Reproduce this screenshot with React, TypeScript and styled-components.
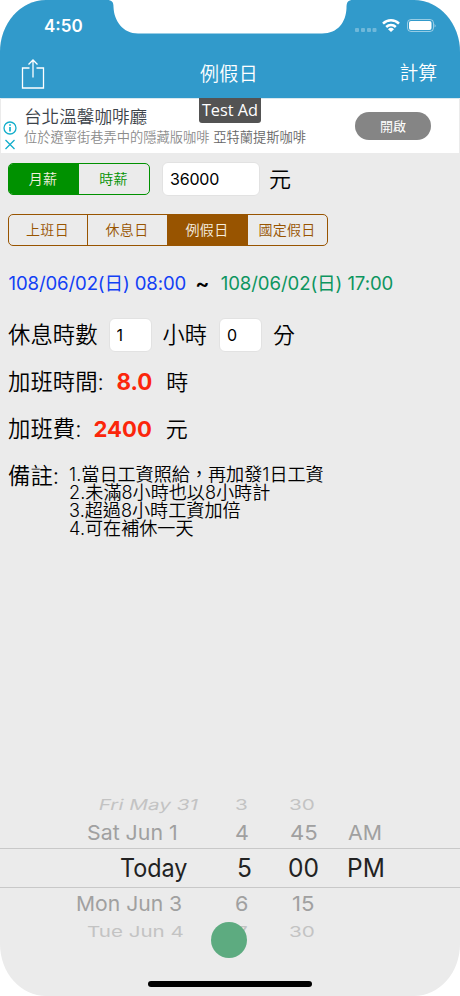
import React from "react";
import styled, { createGlobalStyle } from "styled-components";

const Global = createGlobalStyle`
  * { box-sizing: border-box; }
  html, body { margin: 0; background: #fff; }
`;

const Phone = styled.main`
  position: relative;
  width: 460px;
  height: 996px;
  overflow: hidden;
  display: flex;
  flex-direction: column;
  background: #ebebeb;
  border-radius: 46px / 52px;
  font-family: Inter, "Noto Sans CJK TC", sans-serif;
  color: #000;
`;

const Text = styled.span<{ $size: number; $x?: number; $y?: number; $track?: number; $weight?: number; $color?: string }>`
  flex: none;
  white-space: pre;
  line-height: 1;
  font-size: ${(p) => p.$size}px;
  margin-left: ${(p) => p.$x ?? 0}px;
  margin-top: ${(p) => p.$y ?? 0}px;
  letter-spacing: ${(p) => p.$track ?? 0}px;
  font-weight: ${(p) => p.$weight ?? 350};
  color: ${(p) => p.$color ?? "inherit"};
`;

const Header = styled.header`
  flex: none;
  height: 98px;
  background: #319acb;
  color: #fff;
`;

const StatusBar = styled.div`
  display: flex;
  align-items: center;
  height: 50px;
  padding-left: 44px;
`;

const StatusIcons = styled.svg`
  margin-left: auto;
  display: block;
`;

const NavBar = styled.nav`
  display: grid;
  grid-template-columns: 1fr auto 1fr;
  align-items: center;
  height: 48px;
  padding: 0 23px 0 21px;
  & > :last-child { justify-self: end; }
`;

const Notch = styled.svg`
  position: absolute;
  top: 0;
  left: 106px;
`;

const Ad = styled.section`
  position: relative;
  flex: none;
  display: flex;
  align-items: center;
  height: 55px;
  margin: 0 1px;
  background: #fff;
  border-top: 1px solid #d8e8ef;
`;

const AdMarks = styled.svg`
  flex: none;
  margin: 19px 0 0 1px;
`;

const AdCopy = styled.div`
  display: flex;
  flex-direction: column;
  gap: 5px;
  margin: 0 0 0 6px;
`;

const AdButton = styled.button`
  width: 76px;
  height: 28px;
  margin-left: auto;
  margin-right: 28px;
  padding: 0;
  border: 0;
  border-radius: 14px;
  background: #858585;
  color: #fff;
  font: 400 13px/26px "Noto Sans CJK TC", sans-serif;
`;

const AdBadge = styled.div`
  position: absolute;
  top: -1px;
  left: 198px;
  width: 62px;
  height: 25px;
  border-radius: 0 0 3px 3px;
  background: #535353;
  color: #fff;
  text-align: center;
  font: 400 16.3px/25px "Open Sans", sans-serif;
`;

const Row = styled.div<{ $h: number; $top: number }>`
  flex: none;
  display: flex;
  align-items: center;
  height: ${(p) => p.$h}px;
  margin-top: ${(p) => p.$top}px;
  padding-left: 8px;
`;

const Segments = styled.div<{ $color: string }>`
  display: flex;
  flex: none;
  height: 32px;
  border: 1px solid ${(p) => p.$color};
  border-radius: 5px;
  overflow: hidden;
  color: ${(p) => p.$color};
`;

const Segment = styled.button<{ $w: number; $color: string; $on?: boolean }>`
  width: ${(p) => p.$w}px;
  padding: 0 1px 2px 0;
  border: 0;
  border-right: 1px solid ${(p) => p.$color};
  background: ${(p) => (p.$on ? p.$color : "transparent")};
  color: ${(p) => (p.$on ? "#f5efe0" : p.$color)};
  font: 350 14px/1 "Noto Sans CJK TC", sans-serif;
  letter-spacing: 0.3px;
  &:last-child { border-right: 0; }
`;

const Field = styled.input<{ $w: number; $x: number }>`
  width: ${(p) => p.$w}px;
  height: 34px;
  margin-left: ${(p) => p.$x}px;
  padding: 0 7px 1px;
  border: 1px solid #e2e2e2;
  border-radius: 6px;
  background: #fff;
  color: #000;
  font: 400 16px Inter, sans-serif;
  letter-spacing: -0.2px;
  outline: 0;
`;

const Notes = styled.ol`
  list-style: none;
  margin: -2px 0 0 10px;
  padding: 0;
  font-size: 18.1px;
  font-weight: 350;
  line-height: 18.2px;
  white-space: nowrap;
`;

const Note = styled.li`
  height: 18.2px;
`;

const Picker = styled.section`
  margin-top: auto;
  height: 204px;
`;

const PickerRow = styled.div<{ $h: number; $tone: string; $current?: boolean }>`
  display: grid;
  grid-template-columns: 220px 65px 60px 1fr;
  align-items: center;
  height: ${(p) => p.$h}px;
  color: ${(p) => p.$tone};
  border: solid #c8c8c8;
  border-width: ${(p) => (p.$current ? "1px 0" : "0")};
`;

const Cell = styled.span<{ $x: number; $size: number; $sx: number; $skew?: number }>`
  justify-self: start;
  margin-left: ${(p) => p.$x}px;
  padding-top: ${(p) => (p.$size > 16 ? 1 : 0)}px;
  font-size: ${(p) => p.$size}px;
  font-weight: 400;
  line-height: 1;
  white-space: nowrap;
  transform-origin: left center;
  transform: scaleX(${(p) => p.$sx}) skewX(${(p) => p.$skew ?? 0}deg);
`;

const TouchDot = styled.div`
  position: absolute;
  left: 211px;
  top: 922px;
  width: 36px;
  height: 36px;
  border-radius: 50%;
  background: #5dab80;
`;

const HomeBar = styled.div`
  position: absolute;
  left: 148px;
  top: 981px;
  width: 164px;
  height: 6px;
  border-radius: 3px;
  background: #000;
`;

const GREEN = "#009100";
const BROWN = "#985400";

type CellSpec = [string, number, number, number?];
const wheel: { h: number; size: number; tone: string; current?: boolean; cells: CellSpec[] }[] = [
  { h: 25, size: 15, tone: "#c3c3c3", cells: [["Fri May 31", 99, 1.38, -10], ["3", 15, 1.38], ["30", 4, 1.38]] },
  { h: 31, size: 20.5, tone: "#a0a0a0", cells: [["Sat Jun 1", 87, 1.04], ["4", 15, 1.05], ["45", 5, 1.08], ["AM", 3, 1.04]] },
  { h: 40, size: 25, tone: "#222", current: true, cells: [["Today", 120, 0.935], ["5", 17, 0.98], ["00", 3, 0.98], ["PM", 2, 0.98]] },
  { h: 31, size: 20.5, tone: "#a0a0a0", cells: [["Mon Jun 3", 76, 1.03], ["6", 15, 1.05], ["15", 7, 1.08]] },
  { h: 25, size: 15, tone: "#c3c3c3", cells: [["Tue Jun 4", 87, 1.37], ["7", 16, 1.38], ["30", 4, 1.38]] },
];

export default function App() {
  return (
    <>
      <Global />
      <Phone>
        <Header>
          <StatusBar>
            <Text $size={17} $weight={600} $y={3}>4:50</Text>
            <StatusIcons width="106" height="20" viewBox="354 15 106 20" fill="#fff">
              <g opacity=".3">
                <rect x="355" y="28" width="4" height="4" rx="1" />
                <rect x="361" y="28" width="4" height="4" rx="1" />
                <rect x="367" y="28" width="4" height="4" rx="1" />
                <rect x="372.500" y="28" width="4" height="4" rx="1" />
              </g>
              <g fill="none" stroke="#fff" strokeWidth="2.5">
                <path d="M383 23.600a11.500 11.500 0 0 1 16 0" />
                <path d="M386.200 27a7 7 0 0 1 9.600 0" />
              </g>
              <path d="M388 29.200a4.500 4.500 0 0 1 6 0l-3 2.800z" />
              <rect x="407.500" y="19.500" width="26" height="12" rx="3.500" fill="none" stroke="#fff" strokeOpacity=".5" />
              <rect x="409" y="21" width="22.500" height="9" rx="2" />
              <path d="M434.600 23.500q1.800 2 0 4z" opacity=".6" />
            </StatusIcons>
          </StatusBar>
          <NavBar>
            <svg width="24" height="32" viewBox="0 0 24 32" fill="none" stroke="#fff" strokeWidth="1.300">
              <path d="M8.500 10H1.500v20h21V10H15.500M12 19.500V2M7.500 6.500 12 2l4.500 4.500" />
            </svg>
            <Text $size={19} $track={0.3}>例假日</Text>
            <Text $size={18.8} $y={1}>計算</Text>
          </NavBar>
        </Header>
        <Notch width="248" height="34" viewBox="106 0 248 34" fill="#fff">
          <path d="M107 0C112 0 113.500 2 113.500 7C114 21 123 33.500 138 33.500H322C338 33.500 346 22 346.500 8C346.500 2 348 0 353 0Z" />
        </Notch>
        <Ad>
          <AdMarks width="16" height="34" viewBox="0 0 16 34" fill="none" stroke="#13aecb" strokeWidth="1.300">
            <circle cx="8" cy="9" r="6" />
            <path d="M8 8v4.500M8 5.200v1.500" strokeWidth="1.700" />
            <path d="m3.500 21 9 9m0-9-9 9" />
          </AdMarks>
          <AdCopy>
            <Text $size={17.6} $color="#3c434a">台北溫馨咖啡廳</Text>
            <Text $size={13.25} $color="#8c8c8c">位於遼寧街巷弄中的隱藏版咖啡 <Text $size={13.25} $color="#666">亞特蘭提斯咖啡</Text></Text>
          </AdCopy>
          <AdButton>開啟</AdButton>
          <AdBadge>Test Ad</AdBadge>
        </Ad>
        <Row $h={34} $top={9}>
          <Segments $color={GREEN}>
            <Segment $w={70} $color={GREEN} $on>月薪</Segment>
            <Segment $w={70} $color={GREEN}>時薪</Segment>
          </Segments>
          <Field $w={98} $x={12} defaultValue="36000" />
          <Text $size={22} $x={9}>元</Text>
        </Row>
        <Row $h={32} $top={18}>
          <Segments $color={BROWN}>
            <Segment $w={79} $color={BROWN}>上班日</Segment>
            <Segment $w={80} $color={BROWN}>休息日</Segment>
            <Segment $w={80} $color={BROWN} $on>例假日</Segment>
            <Segment $w={79} $color={BROWN}>國定假日</Segment>
          </Segments>
        </Row>
        <Row $h={30} $top={22}>
          <Text $size={18.6} $x={0.5} $color="#1240f5" $weight={400} $track={-0.13}>108/06/02(日) 08:00</Text>
          <Text $size={21} $x={9} $weight={600}>~</Text>
          <Text $size={18.6} $x={11.5} $color="#0d9560" $weight={400} $track={-0.1}>108/06/02(日) 17:00</Text>
        </Row>
        <Row $h={34} $top={20}>
          <Text $size={22.4}>休息時數</Text>
          <Field $w={43} $x={11} defaultValue="1" />
          <Text $size={22.2} $x={11}>小時</Text>
          <Field $w={43} $x={12} defaultValue="0" />
          <Text $size={22} $x={11}>分</Text>
        </Row>
        <Row $h={30} $top={15}>
          <Text $size={22.4}>加班時間:</Text>
          <Text $size={22.3} $x={12.5} $weight={700} $color="#fb260b">8.0</Text>
          <Text $size={22} $x={14}>時</Text>
        </Row>
        <Row $h={30} $top={17}>
          <Text $size={22.4}>加班費:</Text>
          <Text $size={22.1} $x={12} $weight={700} $color="#fb260b">2400</Text>
          <Text $size={22} $x={14}>元</Text>
        </Row>
        <Row $h={74} $top={21}>
          <Text $size={22.4} $y={-52}>備註:</Text>
          <Notes>
            <Note>1.當日工資照給，再加發1日工資</Note>
            <Note>2.未滿8小時也以8小時計</Note>
            <Note>3.超過8小時工資加倍</Note>
            <Note>4.可在補休一天</Note>
          </Notes>
        </Row>
        <Picker>
          {wheel.map((row, i) => (
            <PickerRow key={i} $h={row.h} $tone={row.tone} $current={row.current}>
              {row.cells.map(([label, x, sx, skew], j) => (
                <Cell key={j} $x={x} $size={row.size} $sx={sx} $skew={skew}>{label}</Cell>
              ))}
            </PickerRow>
          ))}
        </Picker>
        <TouchDot />
        <HomeBar />
      </Phone>
    </>
  );
}
